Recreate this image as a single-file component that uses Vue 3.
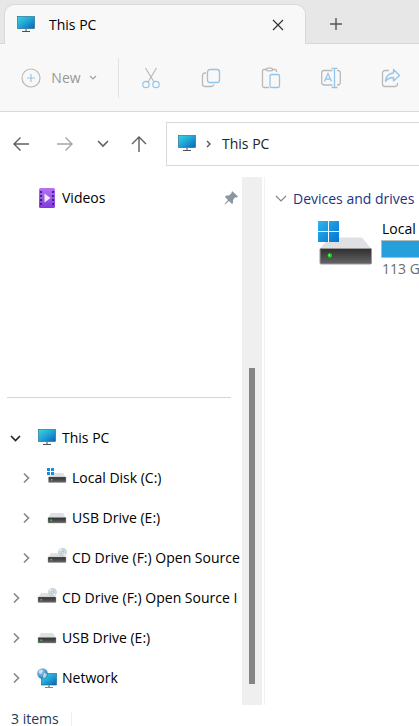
<script setup>
import { ref } from 'vue'

const address = ref('This PC')

const tree = [
  { label: 'This PC', icon: 'pc', level: 0, open: true },
  { label: 'Local Disk (C:)', icon: 'system', level: 1 },
  { label: 'USB Drive (E:)', icon: 'usb', level: 1 },
  { label: 'CD Drive (F:) Open Source', icon: 'cd', level: 1 },
  { label: 'CD Drive (F:) Open Source I', icon: 'cd', level: 0 },
  { label: 'USB Drive (E:)', icon: 'usb', level: 0 },
  { label: 'Network', icon: 'network', level: 0 }
]
</script>

<template>
  <div class="explorer">
    <svg class="defs" aria-hidden="true">
      <defs>
        <linearGradient id="screen" x1="0" y1="0" x2="1" y2="1">
          <stop offset="0" stop-color="#37d6e0" />
          <stop offset="0.5" stop-color="#1fa3d4" />
          <stop offset="1" stop-color="#0c62b8" />
        </linearGradient>
        <linearGradient id="tiles" x1="0" y1="0" x2="1" y2="1">
          <stop offset="0" stop-color="#2db4ee" />
          <stop offset="1" stop-color="#0473d2" />
        </linearGradient>
        <linearGradient id="front" x1="0" y1="0" x2="0" y2="1">
          <stop offset="0" stop-color="#2e2e2e" />
          <stop offset="1" stop-color="#666" />
        </linearGradient>
        <linearGradient id="film" x1="0" y1="0" x2="0" y2="1">
          <stop offset="0" stop-color="#b573f5" />
          <stop offset="1" stop-color="#8238dc" />
        </linearGradient>
        <radialGradient id="globe" cx="0.35" cy="0.3" r="0.8">
          <stop offset="0" stop-color="#9bd3ee" />
          <stop offset="1" stop-color="#1d6fa8" />
        </radialGradient>
      </defs>
      <symbol id="pc" viewBox="0 0 20 20">
        <rect x="1.5" y="1.5" width="17" height="12" fill="url(#screen)" stroke="#17618e" stroke-width="0.600" />
        <path d="M9 14h2v2H9z" fill="#9aa4ac" />
        <path d="M6 16h8v1H6z" fill="#49525b" />
      </symbol>
      <symbol id="usb" viewBox="0 0 20 20">
        <path d="M4 5h12l3 5H1z" fill="#dfe0e3" />
        <rect x="1" y="9.500" width="18" height="5.500" rx="0.500" fill="url(#front)" stroke="#999" stroke-width="0.400" />
        <rect x="3.500" y="11.500" width="1.500" height="1.500" fill="#31e02f" />
      </symbol>
      <symbol id="system" viewBox="0 0 20 20">
        <path d="M5 5h11l3 5H1z" fill="#dfe0e3" />
        <rect x="1.500" y="9" width="17.500" height="5.500" rx="0.500" fill="url(#front)" stroke="#999" stroke-width="0.400" />
        <rect x="4" y="11" width="1.500" height="1.500" fill="#31e02f" />
        <path d="M0 0h7v7H0z" fill="#fff" />
        <path d="M0 0h3v3H0zM4 0h3v3H4zM0 4h3v3H0zM4 4h3v3H4z" fill="#128fdf" />
      </symbol>
      <symbol id="cd" viewBox="0 0 20 20">
        <path d="M4 5h12l3 5H1z" fill="#dfe0e3" />
        <rect x="1" y="9" width="18" height="5.500" rx="0.500" fill="url(#front)" stroke="#999" stroke-width="0.400" />
        <rect x="3.500" y="11" width="1.500" height="1.500" fill="#31e02f" />
        <circle cx="15.500" cy="4.200" r="4" fill="#cfd9df" stroke="#b4c0c7" stroke-width="0.500" />
        <path d="M15.500 4.200L13 1.200M15.500 4.200L18 7.200" stroke="#eef6fa" stroke-width="1.500" />
        <circle cx="15.500" cy="4.200" r="1.300" fill="#f4f8fa" stroke="#91a1aa" stroke-width="0.700" />
      </symbol>
      <symbol id="network" viewBox="0 0 20 20">
        <rect x="4.500" y="5.500" width="15" height="11.500" fill="url(#screen)" stroke="#17618e" stroke-width="0.600" />
        <path d="M11 17h2v2h-2z" fill="#9aa4ac" />
        <path d="M8 19h8v1H8z" fill="#7d868d" />
        <circle cx="5.500" cy="5.500" r="5.300" fill="url(#globe)" />
        <path d="M2 2.500l3-1 1 2-2 2.500-2-1zM7 5l3 1-1 3-2.500 1.500L6 8z" fill="#d2eaf4" opacity="0.800" />
      </symbol>
    </svg>

    <header class="tabs">
      <div class="tab">
        <svg class="icon"><use href="#pc" /></svg>
        <span class="tab-title">This PC</span>
        <button class="plain" aria-label="Close tab">
          <svg width="12" height="12" viewBox="0 0 12 12"><path d="M1 1l10 10M11 1L1 11" fill="none" stroke="#333" stroke-width="1.200" /></svg>
        </button>
      </div>
      <button class="plain new-tab" aria-label="New tab">
        <svg width="12" height="12" viewBox="0 0 12 12"><path d="M6 0v12M0 6h12" fill="none" stroke="#555" stroke-width="1.400" /></svg>
      </button>
    </header>

    <div class="toolbar">
      <button class="plain new">
        <svg width="20" height="20" viewBox="0 0 20 20" fill="none"><circle cx="10" cy="10" r="9" stroke="#b9b9b9" stroke-width="1.200" /><path d="M10 6v8M6 10h8" stroke="#93c5ea" stroke-width="1.200" /></svg>
        <span>New</span>
        <svg width="8" height="6" viewBox="0 0 8 6" fill="none"><path d="M1 1l3 3 3-3" stroke="#a3a3a3" stroke-width="1.200" /></svg>
      </button>
      <div class="tools">
        <button class="plain" aria-label="Cut">
          <svg width="20" height="22" viewBox="0 0 20 22" fill="none" stroke-width="1.200"><path d="M4.500 1l8.500 14M15.500 1L7 15" stroke="#b9b9b9" /><circle cx="5" cy="17.500" r="3.200" stroke="#93c5ea" /><circle cx="15" cy="17.500" r="3.200" stroke="#93c5ea" /></svg>
        </button>
        <button class="plain" aria-label="Copy">
          <svg width="20" height="22" viewBox="0 0 20 22" fill="none" stroke-width="1.300"><path d="M5 6H4a2.500 2.500 0 0 0-2.500 2.500V17A2.500 2.500 0 0 0 4 19.500h6a3 3 0 0 0 3-2" stroke="#b9b9b9" /><rect x="6.500" y="2.500" width="12" height="13" rx="2.500" stroke="#93c5ea" /></svg>
        </button>
        <button class="plain" aria-label="Paste">
          <svg width="20" height="22" viewBox="0 0 20 22" fill="none" stroke-width="1.300"><path d="M6 2.500H3A1.500 1.500 0 0 0 1.500 4v15A1.500 1.500 0 0 0 3 20.500h5M11 2.500h3A1.500 1.500 0 0 1 15.500 4v1" stroke="#b9b9b9" /><rect x="5.500" y="1.200" width="6" height="2.600" rx="1.300" stroke="#b9b9b9" /><rect x="9" y="7.500" width="9.500" height="13" rx="1.500" stroke="#93c5ea" /></svg>
        </button>
        <button class="plain" aria-label="Rename">
          <svg width="20" height="22" viewBox="0 0 20 22" fill="none" stroke-width="1.300"><path d="M11.500 3.500H3A2.500 2.500 0 0 0 .700 6v9.500A2.500 2.500 0 0 0 3 18h8.500M16 3.500h1A2.300 2.300 0 0 1 19.300 6v9.500A2.500 2.500 0 0 1 17 18h-1" stroke="#b9b9b9" /><path d="M3.500 14.500l3.500-8 3.500 8M4.700 12h4.600M13.500 1.500v19M10.500 1.300h6M10.500 20.500h6" stroke="#93c5ea" /></svg>
        </button>
        <button class="plain" aria-label="Share">
          <svg width="20" height="22" viewBox="0 0 20 22" fill="none" stroke-width="1.300" stroke-linejoin="round"><path d="M8 3.500H4A2.500 2.500 0 0 0 1.500 6v11A2.500 2.500 0 0 0 4 19.500h10a2.500 2.500 0 0 0 2.500-2.500v-1" stroke="#b9b9b9" /><path d="M12.500 2.500l6 6-6 5.500v-3.500c-4 0-6 1-8 4 .300-5 3-8 8-8.500z" stroke="#93c5ea" /></svg>
        </button>
      </div>
    </div>

    <nav class="navbar">
      <button class="plain" aria-label="Back"><svg width="18" height="18" viewBox="0 0 18 18" fill="none" stroke="#606060" stroke-width="1.400"><path d="M17 9H2M8.500 2.500L2 9l6.500 6.500" /></svg></button>
      <button class="plain" aria-label="Forward"><svg width="18" height="18" viewBox="0 0 18 18" fill="none" stroke="#a5a5a5" stroke-width="1.400"><path d="M1 9h15M9.500 2.500L16 9l-6.500 6.500" /></svg></button>
      <div class="nav-pair">
        <button class="plain" aria-label="Recent locations"><svg width="18" height="18" viewBox="0 0 18 18" fill="none" stroke="#606060" stroke-width="1.600"><path d="M4 6l5 5 5-5" /></svg></button>
        <button class="plain" aria-label="Up"><svg width="18" height="18" viewBox="0 0 18 18" fill="none" stroke="#606060" stroke-width="1.400"><path d="M9 17V2M2 9l7-7 7 7" /></svg></button>
      </div>
      <label class="address">
        <svg class="icon"><use href="#pc" /></svg>
        <svg width="6" height="8" viewBox="0 0 6 8" fill="none" stroke="#555" stroke-width="1.400"><path d="M1 1l3 3-3 3" /></svg>
        <input v-model="address" type="text" aria-label="Address">
      </label>
    </nav>

    <main class="body">
      <aside class="sidebar">
        <div class="pinned">
          <a class="row" href="#videos">
            <span class="twisty"></span>
            <svg class="icon" viewBox="0 0 20 20">
              <rect x="2" y="0" width="16" height="20" rx="1.500" fill="url(#film)" />
              <path d="M3 3h2v2H3zM3 7h2v2H3zM3 11h2v2H3zM3 15h2v2H3zM15 3h2v2h-2zM15 7h2v2h-2zM15 11h2v2h-2zM15 15h2v2h-2z" fill="#4a1c91" />
              <path d="M7.500 5.500v9l6-4.500z" fill="#f3eafd" />
            </svg>
            <span class="name">Videos</span>
            <svg class="pin" width="14" height="14" viewBox="0 0 14 14"><path d="M8 0l6 5.500-1.500 1L11 6.500 9 9v3l-1 1-3-3-4 3.500L.500 13l3.500-4-3-3 1-1.500 3 0L7.500 2z" fill="#8b979f" /></svg>
          </a>
        </div>
        <hr class="rule">
        <ul class="tree">
          <li v-for="(node, i) in tree" :key="i">
            <a class="row" :class="{ nested: node.level }" href="#open">
              <span class="twisty">
                <svg v-if="node.open" width="12" height="12" viewBox="0 0 12 12" fill="none" stroke="#222" stroke-width="1.600"><path d="M1 4l4.500 4.500L10 4" /></svg>
                <svg v-else width="12" height="12" viewBox="0 0 12 12" fill="none" stroke="#858585" stroke-width="1.600"><path d="M4 1.500L8.500 6 4 10.500" /></svg>
              </span>
              <svg class="icon"><use :href="'#' + node.icon" /></svg>
              <span class="name">{{ node.label }}</span>
            </a>
          </li>
        </ul>
      </aside>
      <div class="track"><div class="thumb"></div></div>
      <section class="content">
        <h2 class="group">
          <svg width="12" height="8" viewBox="0 0 12 8" fill="none" stroke="#858585" stroke-width="1.200"><path d="M1 1l5 5 5-5" /></svg>
          <span>Devices and drives</span>
        </h2>
        <div class="drive">
          <svg width="54" height="44" viewBox="0 0 54 44">
            <path d="M12 16.500h32L53.500 28H1.500z" fill="#dfe0e4" />
            <rect x="2" y="27.500" width="51.500" height="15.500" rx="1" fill="url(#front)" stroke="#999" />
            <circle cx="11.800" cy="34.500" r="2.200" fill="#18d818" />
            <circle cx="11.300" cy="34" r="0.800" fill="#a8ff9c" />
            <path d="M0 0h21v21H0z" fill="#fff" />
            <path d="M0 0h10v10H0zM11 0h10v10H11zM0 11h10v10H0zM11 11h10v10H11z" fill="url(#tiles)" />
          </svg>
          <div class="info">
            <div class="drive-name">Local</div>
            <div class="meter"></div>
            <div class="free">113 G</div>
          </div>
        </div>
      </section>
    </main>

    <footer class="status"><span>3 items</span></footer>
  </div>
</template>

<style>
body {
  margin: 0;
}
</style>

<style scoped>
.explorer {
  display: flex;
  flex-direction: column;
  min-height: 100vh;
  overflow: hidden;
  background: #fff;
  color: #000;
  font: 14px/20px "Open Sans", "Noto Sans", sans-serif;
  box-sizing: border-box;
}
.explorer * {
  box-sizing: border-box;
}
.defs {
  position: absolute;
  width: 0;
  height: 0;
}
svg {
  flex: none;
  display: block;
}
.icon {
  width: 20px;
  height: 20px;
}
.plain {
  display: flex;
  align-items: center;
  justify-content: center;
  padding: 0;
  border: 0;
  background: none;
  font: inherit;
  color: inherit;
}
.tabs {
  display: flex;
  padding: 4px 0 0 4px;
  background: #e7e7e7;
  box-shadow: inset 0 -1px #d9d9d9;
}
.tab {
  display: flex;
  align-items: center;
  gap: 13px;
  width: 302px;
  max-width: 75%;
  height: 40px;
  padding: 0 21px 0 11px;
  border: 1px solid #d9d9d9;
  border-bottom: 0;
  border-radius: 10px 10px 0 0;
  background: #f8f8f8;
}
.tab-title {
  flex: 1;
  font-weight: 500;
}
.new-tab {
  width: 60px;
}
.toolbar {
  display: flex;
  align-items: center;
  height: 68px;
  border-bottom: 1px solid #d9d9d9;
  background: #f8f8f8;
  color: #999;
}
.new {
  gap: 10px;
  height: 40px;
  width: 119px;
  border-right: 1px solid #e2e2e2;
}
.new svg:last-child {
  margin-left: -2px;
}
.tools {
  display: flex;
  gap: 40px;
  padding-left: 22px;
}
.navbar {
  display: flex;
  align-items: center;
  gap: 26px;
  padding: 10px 0 11px 12px;
}
.nav-pair {
  display: flex;
  gap: 18px;
  margin-left: -6px;
}
.address {
  flex: 1;
  min-width: 0;
  display: flex;
  align-items: center;
  gap: 9px;
  height: 44px;
  margin-left: -8px;
  padding-left: 10px;
  border: 1px solid #d9d9d9;
  border-right: 0;
}
.address input {
  flex: 1;
  min-width: 0;
  margin-left: 1px;
  padding: 0;
  border: 0;
  outline: 0;
  background: none;
  font: inherit;
  color: #222;
}
.body {
  flex: 1;
  display: flex;
}
.sidebar {
  flex: none;
  width: 242px;
  padding-bottom: 7px;
}
.pinned {
  height: 220px;
  padding-top: 1px;
}
.rule {
  margin: 0 11px 20px 7px;
  border: 0;
  border-top: 1px solid #d5d5d5;
}
.tree {
  margin: 0;
  padding: 0;
  list-style: none;
}
.row {
  display: flex;
  align-items: center;
  height: 40px;
  padding-left: 10px;
  color: inherit;
  text-decoration: none;
}
.nested {
  padding-left: 20px;
}
.twisty {
  flex: none;
  width: 27px;
}
.name {
  flex: 1;
  min-width: 0;
  margin-left: 5px;
  overflow: hidden;
  white-space: nowrap;
}
.pin {
  margin-right: 4px;
}
.track {
  flex: none;
  display: flex;
  justify-content: center;
  width: 20px;
  padding: 191px 0 21px;
  background: #efefef;
}
.thumb {
  width: 6px;
  background: #858585;
}
.content {
  flex: 1;
  min-width: 0;
  margin-left: 2px;
  padding: 12px 0 0 10px;
  border-left: 1px solid #f2f2f2;
  overflow: hidden;
}
.group {
  display: flex;
  align-items: center;
  gap: 6px;
  margin: 0;
  font: inherit;
  color: #1e3287;
  white-space: nowrap;
}
.drive {
  display: flex;
  gap: 9px;
  padding: 12px 0 0 43px;
}
.info {
  flex: 1;
  min-width: 0;
  margin-top: -2px;
  white-space: nowrap;
}
.drive-name {
  padding-left: 1px;
}
.meter {
  height: 18px;
  margin: 1px 0;
  border: 1px solid #bcbcbc;
  border-right: 0;
  background: #26a0da;
}
.free {
  padding-left: 1px;
  color: #6d6d6d;
}
.status {
  display: flex;
  padding: 7px 0 0 11px;
  line-height: 14px;
  color: #1e395b;
}
.status span {
  padding-right: 12px;
  border-right: 1px solid #eee;
}
</style>
